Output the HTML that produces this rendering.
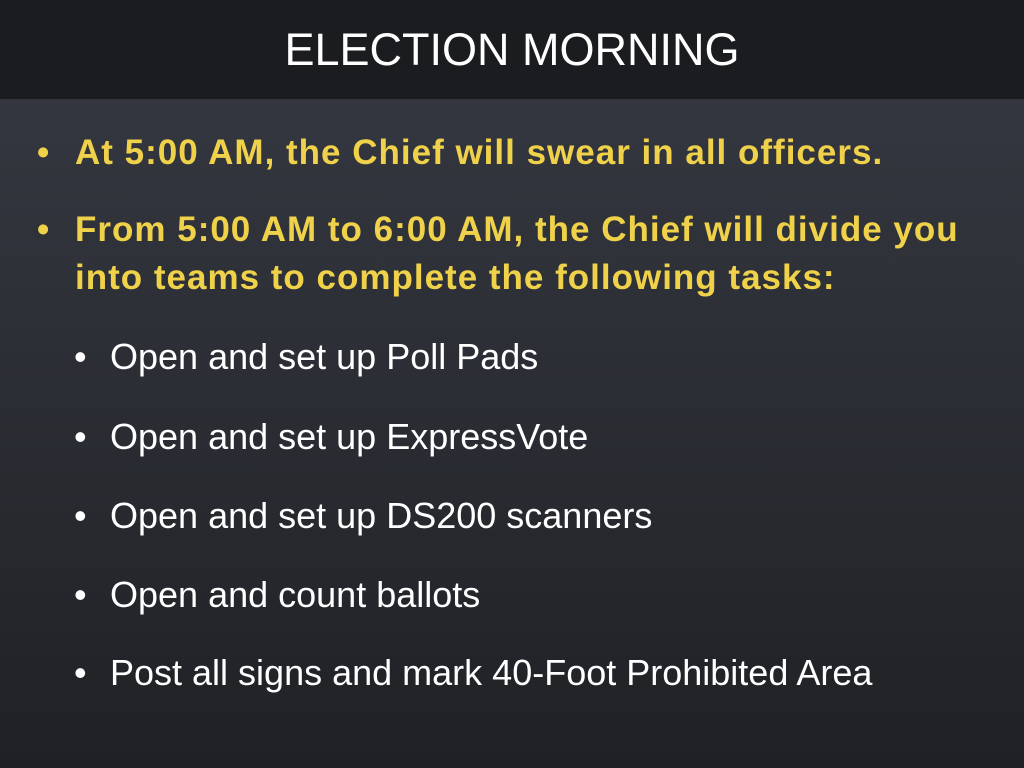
<!DOCTYPE html>
<html><head><meta charset="utf-8"><style>
body{margin:0;width:1024px;height:768px;overflow:hidden;background:linear-gradient(#373a43,#1f2125);font-family:"Liberation Sans",sans-serif;position:relative}
.h{position:absolute;left:0;top:0;width:1024px;height:99px;background:#1b1c1f;color:#fff;font-size:45px;text-align:center;line-height:99px}
.y{position:absolute;left:75px;color:#f0d24a;font-weight:bold;font-size:35px;letter-spacing:1px;line-height:48px;white-space:nowrap}
.y:before{content:"•";position:absolute;left:-38px;}
.w{position:absolute;left:110px;color:#fff;font-size:36px;line-height:40px;white-space:nowrap}
.w:before{content:"•";position:absolute;left:-36px;}
</style></head><body>
<div class="h">ELECTION MORNING</div>
<div class="y" style="top:129px">At 5:00 AM, the Chief will swear in all officers.</div>
<div class="y" style="top:206px">From 5:00 AM to 6:00 AM, the Chief will divide you<br>into teams to complete the following tasks:</div>
<div class="w" style="top:337px">Open and set up Poll Pads</div>
<div class="w" style="top:417px">Open and set up ExpressVote</div>
<div class="w" style="top:496px">Open and set up DS200 scanners</div>
<div class="w" style="top:575px">Open and count ballots</div>
<div class="w" style="top:653px">Post all signs and mark 40-Foot Prohibited Area</div>
</body></html>
